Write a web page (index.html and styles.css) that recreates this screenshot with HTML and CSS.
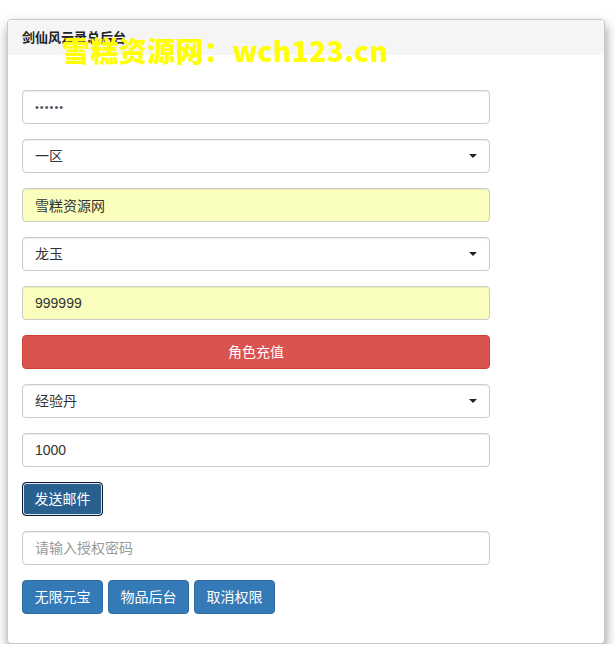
FILE: index.html
```html
<!DOCTYPE html>
<html lang="zh">
<head>
<meta charset="utf-8">
<title>剑仙风云录总后台</title>
<link rel="stylesheet" href="styles.css">
</head>
<body>
<div class="page">
  <div class="panel">
    <div class="panel-heading">
      <span class="panel-title">剑仙风云录总后台</span>
      <span class="watermark">雪糕资源网：wch123.cn</span>
    </div>
    <div class="panel-body">
      <div class="form-group"><input class="form-control" type="password" value="123456"></div>
      <div class="form-group select-wrap">
        <select class="form-control"><option>一区</option></select>
      </div>
      <div class="form-group"><input class="form-control autofill" type="text" value="雪糕资源网"></div>
      <div class="form-group select-wrap">
        <select class="form-control"><option>龙玉</option></select>
      </div>
      <div class="form-group"><input class="form-control autofill" type="text" value="999999"></div>
      <div class="form-group"><button class="btn btn-danger btn-block">角色充值</button></div>
      <div class="form-group select-wrap">
        <select class="form-control"><option>经验丹</option></select>
      </div>
      <div class="form-group"><input class="form-control" type="text" value="1000"></div>
      <div class="form-group"><button class="btn btn-primary btn-focus">发送邮件</button></div>
      <div class="form-group"><input class="form-control" type="text" placeholder="请输入授权密码"></div>
      <div class="btn-row">
        <button class="btn btn-primary">无限元宝</button>
        <button class="btn btn-primary">物品后台</button>
        <button class="btn btn-primary">取消权限</button>
      </div>
    </div>
  </div>
</div>
</body>
</html>
```

FILE: styles.css
```css
* { box-sizing: border-box; }
html, body { margin: 0; padding: 0; background: #fff; }
body {
  font-family: "Liberation Sans", "Noto Sans CJK SC", sans-serif;
  font-size: 14px;
  color: #333;
}
.page { padding: 19px 10px 0 7px; width: 615px; }
.panel {
  width: 598px;
  border: 1px solid #c8c8c8;
  border-radius: 4px;
  background: #fff;
  box-shadow: 1px 6px 12px rgba(0,0,0,0.4);
}
.panel-heading {
  position: relative;
  height: 35px;
  padding: 9px 14px;
  background: #f5f5f5;
  border-radius: 3px 3px 0 0;
}
.panel-title {
  font-size: 13px;
  font-weight: bold;
  color: #222;
  line-height: 16px;
}
.watermark {
  position: absolute;
  left: 54px;
  top: 13px;
  font-family: "Noto Sans CJK SC", "Liberation Sans", sans-serif;
  font-weight: 900;
  font-size: 28px;
  line-height: 34px;
  color: #ffff00;
  white-space: nowrap;
  letter-spacing: 0.4px;
}
.panel-body { padding: 35px 14px 29px 14px; }
.form-group { margin-bottom: 15px; width: 468px; }
.form-control {
  display: block;
  width: 468px;
  height: 34px;
  padding: 6px 12px;
  font-family: "Liberation Sans", "Noto Sans CJK SC", sans-serif;
  font-size: 14px;
  color: #333;
  background: #fff;
  border: 1px solid #ccc;
  border-radius: 4px;
  box-shadow: inset 0 1px 1px rgba(0,0,0,0.075);
  -webkit-appearance: none;
  appearance: none;
  outline: none;
}
.form-control::placeholder { color: #999; }
input[type=password].form-control { font-size: 11px; letter-spacing: 1px; color: #555; }
.autofill { background: #faffbd; }
.select-wrap { position: relative; }
.select-wrap::after {
  content: "";
  position: absolute;
  left: 447px;
  top: 15px;
  border-left: 4px solid transparent;
  border-right: 4px solid transparent;
  border-top: 4px solid #222;
}
.btn {
  display: inline-block;
  height: 34px;
  padding: 6px 12px;
  font-family: "Liberation Sans", "Noto Sans CJK SC", sans-serif;
  font-size: 14px;
  line-height: 20px;
  color: #fff;
  border: 1px solid transparent;
  border-radius: 4px;
  cursor: pointer;
}
.btn-block { display: block; width: 468px; }
.btn-danger { background: #d9534f; border-color: #d43f3a; }
.btn-primary { background: #337ab7; border-color: #2e6da4; width: 81px; padding: 6px 0; }
.btn-focus {
  background: #286090;
  border-color: #0b1b2a;
  box-shadow: inset 0 0 0 1px #dfe8f0;
}
.btn-row { display: flex; gap: 5px; }
```
